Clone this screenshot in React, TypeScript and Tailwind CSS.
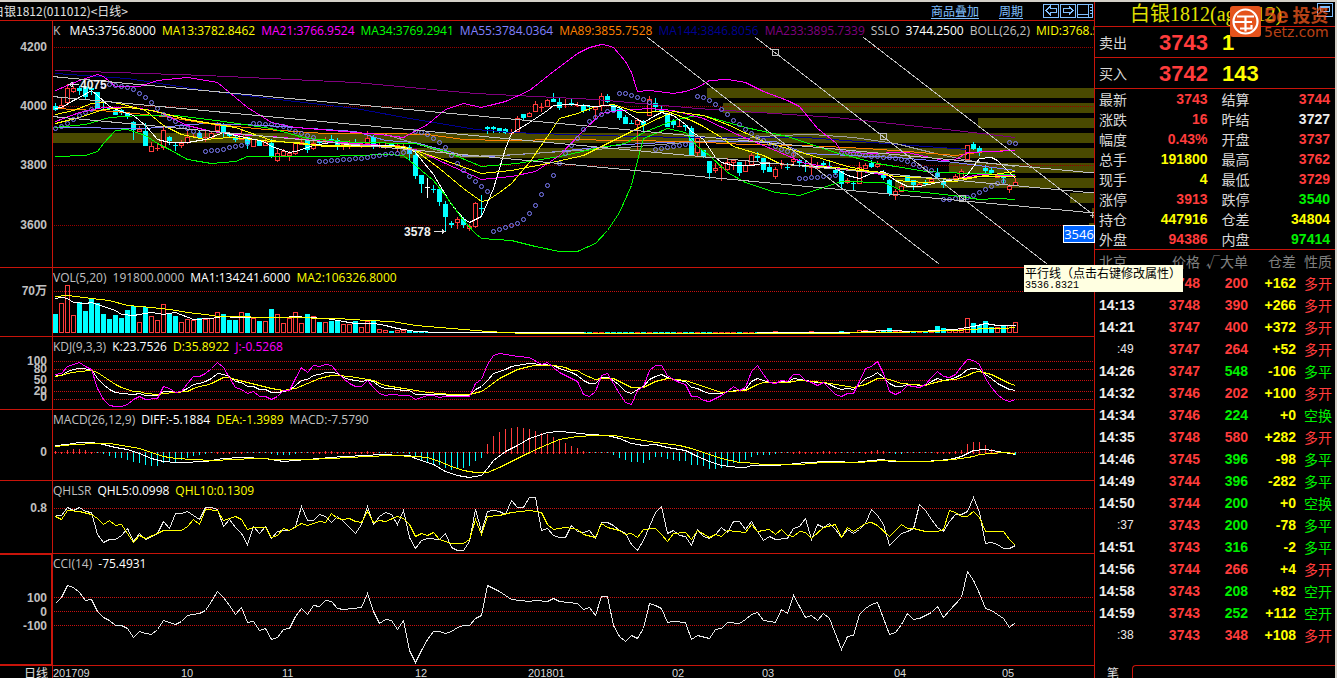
import type { ReactNode } from 'react';
import clsx from 'clsx';

const LATIN = "font-['Open_Sans','Noto_Sans_CJK_SC',sans-serif]";
const BOLD = "font-['Liberation_Sans','Noto_Sans_CJK_SC',sans-serif] font-bold";
const CJK = "font-['Noto_Sans_CJK_SC',sans-serif]";

const RED = '#ff3c3c';
const CYAN = '#00ffff';

// one bar every 6px, first one centred on x = 55
const barX = (i: number) => 55 + i * 6;

// "index y index y ..." -> svg points
const toPoints = (data: string) => {
  const n = data.trim().split(/\s+/).map(Number);
  const out: string[] = [];
  for (let k = 0; k < n.length; k += 2) out.push(`${barX(n[k]) + 0.5},${n[k + 1] + 0.5}`);
  return out.join(' ');
};

// direction, body top, body bottom, high, low
const CANDLES = `d 106 110 103 111|u 105 107 97 107|u 88 102 84 105|u 88 91 86 93|d 88 91 86 95|d 87 97 86 99|d 88 90 86 95|d 92 109 92 109
d 109 110 102 110|d 108 109 106 110|d 110 115 109 115|d 110 113 109 115|d 112 116 112 119|d 122 130 121 140|u 129 131 126 132|d 131 146 123 146
u 146 151 142 152|u 148 149 143 151|u 130 147 126 150|d 137 141 136 145|d 145 146 142 151|u 143 145 140 148|u 137 142 131 144|u 136 137 134 137
d 133 138 130 138|u 137 138 131 142|u 133 137 132 139|u 125 130 122 133|d 124 133 123 137|d 134 136 132 137|d 137 140 136 142|u 134 139 130 140
d 137 144 137 149|u 139 146 139 147|d 141 146 141 146|u 142 145 138 146|d 143 156 139 158|u 153 160 148 162|u 151 155 149 157|u 153 155 151 161
u 143 153 142 155|u 142 144 138 145|d 140 150 140 153|u 143 148 139 150|d 142 143 140 146|u 140 141 137 143|d 139 140 135 142|d 140 147 138 150
u 144 146 141 150|u 144 146 140 149|d 142 146 139 147|u 144 146 142 148|u 138 143 131 146|d 137 145 135 149|u 145 146 142 148|u 145 147 142 149
d 144 146 143 148|u 145 147 143 152|u 146 147 143 149|d 147 154 145 160|d 155 176 150 179|d 175 184 175 193|w 187 188 178 198|d 189 190 185 193
d 189 202 189 206|d 204 217 201 231|d 223 225 221 228|u 219 222 217 229|d 219 225 217 228|u 226 228 224 231|u 203 226 202 228|d 208 209 195 216
d 127 129 126 134|d 127 129 126 133|d 128 131 128 133|d 129 133 128 134|u 133 134 129 135|u 118 131 116 132|d 114 118 114 120|u 113 116 112 117
u 104 111 101 112|u 107 108 103 112|u 100 106 99 107|d 99 102 93 102|d 102 108 97 110|u 104 105 99 108|d 103 104 98 106|u 105 106 102 107
d 105 111 104 113|d 106 107 106 111|u 107 109 107 118|u 96 105 93 111|d 96 102 94 103|d 105 111 104 111|d 109 118 108 120|d 117 124 115 124
d 123 124 120 124|u 120 124 118 150|d 122 125 120 132|u 99 115 96 116|d 103 107 98 112|d 110 112 105 113|d 113 127 113 127|d 121 125 119 128
u 126 127 121 127|d 125 127 124 131|d 128 155 126 156|u 138 152 135 156|d 150 157 150 158|d 161 173 161 179|u 168 170 163 173|u 167 168 164 181
u 162 169 158 171|u 160 162 159 170|d 162 173 162 176|u 165 171 161 172|u 155 164 153 166|d 156 158 152 161|d 158 170 158 173|d 167 172 163 172
u 169 176 167 179|u 163 164 160 169|d 167 168 163 170|u 159 161 153 165|d 160 163 159 167|d 165 166 161 172|u 165 167 157 175|u 168 169 162 170
d 163 165 161 168|d 166 167 162 168|d 170 173 169 175|d 171 184 171 189|u 180 182 178 184|d 183 184 181 190|u 167 183 162 184|u 165 168 163 169
d 163 167 160 168|u 164 166 161 168|d 172 178 170 180|d 180 194 179 196|u 191 195 189 200|u 186 191 183 192|d 176 181 176 181|d 180 185 180 190
u 184 186 183 187|d 182 184 180 186|u 179 181 178 182|d 173 177 168 178|d 182 185 180 188|u 179 181 178 182|u 176 178 174 180|u 171 177 169 178
u 145 159 145 159|d 144 149 142 150|d 148 153 146 156|d 168 171 165 173|d 170 173 167 173|u 175 177 175 178|d 176 178 174 183|u 186 189 184 193|u 182 185 178 186`
  .split(/[|\n]/)
  .map((row) => {
    const [dir, ...rest] = row.trim().split(' ');
    const [top, bottom, high, low] = rest.map(Number);
    return { dir, top, bottom, high, low };
  });

const ONES = (n: number) => Array<number>(n).fill(1);

const VOLUME = [
  19, 30, 48, 18, 31, 22, 34, 30, 19, 14, 18, 15, 23, 27, 11, 26, 17, 13, 29, 19, 17, 11, 14, 13, 15, 14, 15, 21, 19, 13,
  13, 21, 20, 15, 12, 12, 24, 19, 10, 15, 21, 10, 19, 17, 11, 11, 12, 12, 9, 9, 12, 6, 12, 12, 4, 3, 2, 3, 3, 2, 2,
  ...ONES(59), 2, ...ONES(5), 2, ...ONES(4), 2, 1, 1,
  3, 3, 2, 3, 2, 5, 2, 2, 2, 2, 2, 2, 3, 7, 5, 3, 3, 4, 15, 10, 8, 12, 6, 6, 7, 8, 11,
];

const MACD_BARS = [
  2, 1, 3, 4, 4, 3, 1, 0, -1, -3, -5, -5, -7, -9, -10, -12, -13, -13, -10, -9, -9, -7, -5, -3, -2, -1, 0, 1, 1, 1, 0, 1, 0,
  0, 0, 0, -1, -2, -2, -2, -1, 0, 0, 1, 1, 2, 2, 1, 1, 1, 1, 1, 2, 1, 0, 0, 0, 0, 0, -1, -4, -8, -9, -11, -12, -15, -17,
  -16, -15, -13, -8, -5, 9, 17, 21, 24, 25, 26, 25, 24, 22, 20, 19, 16, 14, 10, 7, 5, 2, 0, 0, 0, 0, -2, -5, -7, -9, -9,
  -10, -7, -4, -4, -6, -7, -8, -8, -12, -12, -13, -16, -16, -15, -13, -10, -10, -7, -4, -2, -2, -2, -1, 0, 0, 1, 2, 1, 1,
  1, 2, 2, 1, 0, 0, 0, 0, 1, 2, 3, 2, 0, -1, -1, 0, 0, 0, 0, 0, 1, 1, 1, 2, 3, 9, 11, 11, 8, 4, 2, 0, -1, -2,
];

// parabolic stop dots: [first bar, y, y, ...]
const SAR = [
  [0, 128, 126, 123, 119, 115, 112, 109, 104],
  [8, 85, 84, 85, 86, 87, 89, 93, 97, 102, 108, 114, 118, 121, 126, 128, 131, 134],
  [25, 151, 150, 150, 149, 147, 146, 145, 143],
  [33, 123, 123, 124, 124, 125, 126, 128, 131, 133, 135, 137],
  [44, 161, 161, 160, 160, 159, 159, 158, 158, 157, 156, 155, 154, 153, 153, 152, 151],
  [60, 131, 132, 134, 138, 142, 147, 155, 163, 170, 176, 181, 186, 191],
  [73, 231, 229, 227, 225, 223, 219, 213, 205, 194, 185, 175, 163, 153, 145, 138, 129, 121, 117, 114, 111, 110],
  [94, 93, 93, 95, 97, 99, 102],
  [100, 149, 148, 147, 146, 145, 144, 143],
  [107, 96, 97, 100, 104, 109, 114, 120, 124, 129, 133, 137, 140, 143, 146, 149, 151, 154],
  [124, 178, 178, 177, 177, 176, 176, 175],
  [131, 152, 152, 153, 154, 155, 156, 156, 157, 157, 158, 159, 161, 164, 166, 168, 170, 174],
  [148, 199, 199, 198, 197, 197, 195, 192, 189, 186, 183, 181],
  [159, 142, 143],
];

const PRICE_LINES: [string, string][] = [
  ['#80007f', '0 70 25 75 50 82 70 93 90 99 107 108 130 117 150 130 160 137'],
  ['#000090', '0 73 12 78 25 90 40 101 50 108 60 119 70 129 76 132 90 135 105 137 125 137 145 146 152 149'],
  ['#8080ff', '0 127 15 128 25 123 35 125 50 131 55 140 60 142 68 155 72 156 82 152 95 144 105 141 120 141 125 153 140 157 150 162 160 170'],
  ['#a0a0a0', '55 134 60 143 66 154 68 156 74 155 82 152 95 147 105 142 115 138 120 135 126 134 133 137 140 143 146 152 152 160 160 166'],
  ['#ff8000', '0 108 10 111 18 116 25 123 35 129 45 133 55 133 62 134 68 139 75 140 85 139 105 141 115 144 125 145 135 148 142 151 150 155 155 151 160 150'],
  ['#00ff00', '0 127 5 124 9 117 14 115 20 115 28 121 36 128 42 138 50 142 60 143 65 151 71 166 77 163 84 156 90 148 95 143 98 132 103 120 106 116 108 115 115 127 122 136 130 152 137 163 145 171 152 173 160 174'],
  ['#ff00ff', '0 121 4 112 8 107 13 107 17 111 22 125 26 131 30 134 36 136 45 141 55 145 60 149 65 163 71 179 76 176 80 171 84 155 88 130 91 113 94 110 99 108 103 110 108 118 114 135 120 150 125 163 132 169 140 176 150 179 154 174 160 175'],
  ['#ffff00', '0 114 3 110 6 103 9 101 12 105 15 110 18 125 21 134 25 139 29 137 33 139 36 141 40 142 44 145 50 145 56 146 60 150 64 168 68 188 71 201 72 200 74 192 76 183 79 162 82 136 84 118 87 113 90 106 93 104 97 112 102 111 106 120 108 126 111 137 113 146 118 155 121 164 130 167 134 170 138 172 140 180 145 182 150 181 154 176 160 176'],
  ['#ffffff', '0 108 1 107 3 100 4 97 6 90 7 95 9 106 11 111 13 115 15 125 17 139 19 142 22 142 25 139 28 132 30 135 34 140 35 142 36 146 39 152 40 151 43 145 46 142 50 145 56 145 58 147 59 148 60 152 63 174 66 204 68 218 69 222 71 216 73 188 75 148 76 133 79 122 82 110 83 105 86 104 90 106 92 105 94 107 95 111 97 119 98 122 100 115 101 112 103 115 105 124 106 131 108 139 109 148 110 157 111 162 113 165 116 165 118 163 120 163 124 165 130 168 132 175 134 178 136 173 138 171 140 180 142 186 144 186 147 182 151 178 152 174 154 158 156 157 157 160 160 178'],
  ['#ff00ff', '0 90 4 80 7 74 8 76 10 86 14 86 17 80 22 77 27 82 32 107 36 122 40 127 54 134 58 137 62 124 65 109 68 103 71 107 75 101 79 90 83 71 87 53 89 47 91 44 92 45 93 47 95 61 96 72 97 91 99 90 103 93 105 91 107 87 109 80 112 79 115 82 118 91 122 100 124 106 127 128 130 142 131 151 135 153 142 152 148 160 150 159 152 152 160 150'],
  ['#ffff00', '0 123 4 117 8 109 12 107 16 110 22 119 30 127 36 140 45 146 58 146 64 158 71 173 76 170 82 163 88 155 93 140 98 125 103 111 108 115 112 124 118 141 126 155 132 166 140 176 150 179 160 171'],
  ['#00ff00', '0 156 5 155 7 151 8 143 10 130 12 129 15 135 17 143 19 149 22 159 26 163 30 161 32 156 45 156 55 154 58 155 60 165 63 180 65 195 68 220 70 233 71 238 76 240 80 246 84 251 87 251 90 243 92 230 94 212 96 185 97 160 98 138 102 128 105 132 107 146 109 155 112 172 115 182 120 192 124 195 128 187 131 181 138 182 141 190 145 192 151 196 154 199 157 198 160 199'],
];

const VOL_LINES: [string, string][] = [
  ['#ffffff', '0 298 1 297 2 298 3 302 5 303 6 302 8 306 10 310 11 314 13 315 16 312 18 314 20 312 23 319 26 318 28 316 30 317 33 317 38 317 40 316 42 317 45 318 48 321 50 323 53 323 55 325 57 328 60 331 64 332 112 333 122 332 133 332 138 330 144 331 150 329 153 326 155 323 157 325 160 325'],
  ['#ffff00', '0 296 2 295 6 298 9 300 12 305 16 307 19 309 22 312 25 314 27 316 38 317 47 318 52 320 56 321 60 325 66 328 72 331 78 333 125 333 140 332 150 330 155 328 158 328 160 327'],
];

const KDJ_LINES: [string, string][] = [
  ['#ffffff', '0 375 1 375 2 371 3 369 4 368 6 369 7 378 8 384 9 389 10 392 11 393 13 394 14 393 15 395 17 395 18 391 19 391 20 392 21 391 22 388 23 384 24 383 25 381 26 378 27 373 28 374 29 376 30 381 31 382 32 386 33 386 34 389 35 389 36 392 37 392 38 391 39 390 40 385 41 380 42 379 43 375 44 374 45 372 46 372 47 373 48 377 49 379 50 380 51 381 52 380 53 381 54 386 55 388 56 388 58 390 59 390 60 394 64 394 66 395 69 395 70 389 71 386 72 380 73 373 74 371 75 369 76 366 78 364 79 363 81 364 83 365 84 368 86 372 87 375 88 380 89 383 90 383 91 377 92 377 93 380 94 385 95 391 96 393 97 389 98 386 99 379 100 376 101 374 102 377 103 379 105 381 106 387 107 388 108 391 109 393 111 393 112 391 114 390 115 389 116 381 117 378 118 380 119 382 120 383 121 381 122 382 123 378 124 379 125 380 127 382 128 382 129 384 130 387 131 389 132 388 133 389 134 384 135 378 136 376 137 372 138 377 139 383 140 386 141 386 142 384 145 385 146 381 147 378 148 380 149 379 150 377 151 374 152 369 153 368 154 369 155 374 156 378 157 383 158 386 159 389 160 390'],
  ['#ffff00', '0 376 1 375 2 373 4 371 6 370 7 372 8 376 9 380 10 384 11 387 12 389 13 391 14 391 15 393 17 394 18 393 20 392 22 391 23 388 24 386 25 385 26 383 27 380 28 377 29 377 30 379 32 382 34 385 36 388 38 390 39 389 40 388 42 383 44 378 46 375 47 375 49 376 50 377 52 379 53 380 54 383 55 385 58 388 60 390 62 392 66 394 69 394 71 391 72 387 74 378 77 369 79 366 80 365 83 365 85 367 86 370 87 370 88 374 90 379 91 378 93 378 94 381 96 387 98 387 100 381 102 378 105 380 107 384 109 388 111 392 113 391 114 390 115 390 117 384 118 382 122 382 124 380 128 382 130 384 133 387 135 384 137 378 138 378 139 379 140 381 141 383 145 385 146 383 148 380 150 379 152 375 153 372 154 371 156 374 158 380 159 383 160 385'],
  ['#ff00ff', '0 374 1 373 2 366 3 364 4 362 5 366 6 369 7 388 8 399 9 405 10 406 11 406 12 404 13 399 14 396 15 399 17 398 18 386 19 388 20 392 21 391 22 383 23 376 24 376 25 373 26 368 27 362 28 367 29 377 30 387 31 389 32 393 33 391 34 396 35 396 36 399 37 396 38 390 39 390 40 378 41 367 42 372 43 365 44 366 45 364 46 365 47 372 48 378 49 383 50 386 51 386 52 380 53 387 54 393 55 395 56 394 58 395 59 395 60 399 61 397 62 395 63 395 64 397 65 396 66 396 67 396 69 396 70 383 71 379 72 364 73 355 74 353 75 354 77 356 79 357 81 364 82 362 83 367 84 372 85 375 86 378 87 381 88 394 89 396 90 391 91 375 92 373 93 383 94 393 95 402 96 404 97 390 98 386 99 370 100 365 101 365 102 375 103 379 104 382 105 384 106 396 107 396 108 400 109 401 110 398 111 395 112 391 113 386 114 390 115 387 116 371 117 365 118 374 119 382 120 383 121 380 122 381 123 374 124 374 125 380 126 382 127 385 128 382 129 388 130 394 131 396 132 393 133 393 134 381 135 368 136 366 137 361 138 373 139 391 140 394 141 391 142 385 144 387 145 384 146 377 147 371 148 376 149 377 150 374 151 366 152 359 153 360 154 364 155 378 156 387 157 394 158 399 159 401 160 399'],
];

const MACD_LINES: [string, string][] = [
  ['#ffffff', '0 445 2 444 4 442 6 442 7 443 8 444 10 447 12 449 14 453 16 458 18 461 20 462 22 462 24 461 25 461 28 458 31 457 35 458 38 461 40 460 44 458 48 456 52 455 54 454 58 455 59 455 60 458 63 464 65 471 67 475 69 477 71 475 72 468 73 460 75 451 77 445 79 438 81 434 82 432 84 431 86 432 89 434 92 435 94 438 96 443 98 445 100 444 102 447 105 450 107 456 109 461 111 465 114 467 115 467 116 465 120 465 122 464 125 462 129 461 130 461 133 462 136 460 138 459 139 461 143 461 145 461 149 459 151 456 152 453 153 450 155 449 157 451 159 453 160 454'],
  ['#ffff00', '0 446 3 444 7 443 9 443 11 445 14 448 16 452 18 456 20 458 23 459 26 460 30 459 33 458 38 459 42 459 46 458 52 456 56 455 60 456 62 457 64 461 66 466 68 470 70 472 72 472 74 467 77 458 79 452 82 444 84 439 87 436 90 435 93 435 96 438 100 442 104 445 106 448 109 454 111 458 114 462 115 462 118 464 124 464 128 462 134 462 138 460 142 461 145 461 148 460 151 458 153 456 154 454 158 452 160 453'],
];

const QHL_LINES: [string, string][] = [
  ['#e8e8e8', '0 515 1 515 2 507 3 510 4 507 5 511 6 512 7 534 8 542 9 539 10 539 11 535 12 528 13 541 14 533 15 539 17 533 18 521 19 528 20 513 21 513 22 511 23 515 24 519 25 507 26 507 27 509 28 526 29 519 30 527 31 533 32 544 33 526 34 533 35 526 36 538 37 531 38 530 39 530 40 526 41 506 42 520 43 520 44 514 45 516 46 522 47 516 48 521 49 527 50 533 51 524 52 506 53 524 54 516 55 512 56 514 57 524 58 510 59 537 60 548 61 540 62 538 64 539 65 533 66 547 67 550 68 550 69 541 70 509 71 531 72 511 73 510 74 511 75 514 76 500 77 507 78 507 79 497 80 497 81 530 82 528 83 535 84 537 85 537 86 525 87 531 88 532 89 530 90 538 91 522 92 522 93 525 94 530 95 533 96 544 97 550 98 540 99 526 100 512 101 506 102 533 103 530 104 535 105 536 106 545 107 529 108 536 109 538 110 534 111 527 112 532 113 521 114 521 115 529 116 521 117 531 118 540 119 536 120 539 122 538 123 528 124 526 125 518 126 539 127 524 128 527 129 523 130 529 131 537 132 529 133 533 134 529 135 523 136 509 137 515 138 524 139 545 140 539 141 533 142 531 143 528 144 504 145 510 146 519 147 527 148 531 149 521 150 514 151 514 152 511 153 497 154 512 155 543 156 542 157 544 158 548 159 548 160 545'],
  ['#ffff00', '0 516 1 519 2 510 4 511 6 514 7 518 8 524 9 520 10 525 11 524 13 542 14 535 15 538 17 533 18 530 21 530 22 526 23 519 24 524 25 509 27 510 28 520 30 516 31 519 32 529 33 527 35 527 36 537 37 535 38 528 39 530 41 523 42 525 44 521 45 522 46 513 47 518 48 519 49 518 50 521 51 522 52 511 53 522 54 520 55 521 57 516 58 518 59 524 60 536 61 533 62 535 63 532 64 539 66 543 68 543 69 539 70 519 71 534 72 516 74 515 76 512 79 510 81 512 82 524 83 529 85 527 87 529 88 534 90 537 91 523 92 527 94 530 95 534 96 533 97 537 98 529 100 528 101 534 102 541 103 533 105 532 106 539 107 530 109 537 110 534 111 536 112 530 115 532 116 524 117 531 119 529 120 534 121 529 122 535 123 536 124 531 125 532 126 538 128 527 130 524 131 537 132 527 133 531 135 523 136 522 137 525 139 536 141 524 142 528 143 528 145 531 147 531 148 529 149 510 150 512 151 516 152 516 153 511 154 517 155 531 158 531 159 539 160 545'],
];

const CCI_LINES: [string, string][] = [
  ['#e8e8e8', '0 603 1 597 2 585 3 587 4 592 5 600 6 599 7 611 8 617 9 620 10 625 11 625 12 628 13 637 14 631 15 633 16 634 17 629 18 620 20 624 21 621 22 615 24 613 25 610 26 601 27 591 28 597 29 605 30 614 31 607 32 622 33 621 34 630 35 628 36 639 37 637 38 629 39 628 40 616 41 608 42 614 43 605 44 606 45 600 46 601 47 608 48 609 51 607 52 593 53 611 54 623 55 619 56 620 57 629 58 620 59 650 60 662 61 650 62 639 63 631 64 631 65 633 66 631 67 627 68 625 69 625 70 618 71 615 72 585 74 591 76 599 79 601 80 600 82 601 83 598 84 601 87 603 88 609 89 607 90 615 91 596 92 596 93 625 94 636 95 641 96 635 97 638 98 628 99 603 100 605 101 608 102 622 103 621 105 622 106 639 107 635 109 638 110 629 111 628 112 622 114 623 115 619 116 614 117 612 118 620 120 622 121 609 122 613 123 595 125 617 126 615 127 620 128 613 129 618 131 649 132 636 133 635 134 614 135 608 136 604 137 602 139 634 140 632 141 624 142 613 143 619 144 618 146 612 147 606 148 617 149 610 151 597 152 571 153 580 154 593 155 608 156 610 157 614 158 618 159 627 160 622'],
];

// x, y of the profile bands; all of them run off the right edge
const BANDS = [
  [707, 88], [723, 103], [978, 118], [53, 133], [400, 148], [949, 163], [895, 178], [1070, 193], [1092, 208], [1089, 223],
];

const QUOTES: [string, string, string][] = [
  ['最新', '3743', 'text-[#ff3c3c]'], ['结算', '3744', 'text-[#ff3c3c]'],
  ['涨跌', '16', 'text-[#ff3c3c]'], ['昨结', '3727', 'text-[#ececec]'],
  ['幅度', '0.43%', 'text-[#ff3c3c]'], ['开盘', '3737', 'text-[#ff3c3c]'],
  ['总手', '191800', 'text-[#ffff00]'], ['最高', '3762', 'text-[#ff3c3c]'],
  ['现手', '4', 'text-[#ffff00]'], ['最低', '3729', 'text-[#ff3c3c]'],
  ['涨停', '3913', 'text-[#ff3c3c]'], ['跌停', '3540', 'text-[#00f000]'],
  ['持仓', '447916', 'text-[#ffff00]'], ['仓差', '34804', 'text-[#ffff00]'],
  ['外盘', '94386', 'text-[#ff3c3c]'], ['内盘', '97414', 'text-[#00f000]'],
];

// time, price, lot, open interest change, kind, lot is green
const TICKS: [string, string, string, string, string, boolean][] = [
  ['14:08', '3748', '200', '+162', '多开', false],
  ['14:13', '3748', '390', '+266', '多开', false],
  ['14:21', '3747', '400', '+372', '多开', false],
  [':49', '3747', '264', '+52', '多开', false],
  ['14:26', '3747', '548', '-106', '多平', true],
  ['14:32', '3746', '202', '+100', '多开', false],
  ['14:34', '3746', '224', '+0', '空换', true],
  ['14:35', '3748', '580', '+282', '多开', false],
  ['14:46', '3745', '396', '-98', '多平', true],
  ['14:49', '3744', '396', '-282', '多平', true],
  ['14:50', '3744', '200', '+0', '空换', true],
  [':37', '3743', '200', '-78', '多平', true],
  ['14:51', '3743', '316', '-2', '多平', true],
  ['14:56', '3744', '266', '+4', '多开', false],
  ['14:58', '3743', '208', '+82', '空开', true],
  ['14:59', '3743', '252', '+112', '空开', true],
  [':38', '3743', '348', '+108', '多开', false],
];

const MONTHS: [string, number][] = [
  ['201709', 53], ['10', 181], ['11', 282], ['12', 415], ['201801', 528], ['02', 672], ['03', 762], ['04', 894], ['05', 1002],
];

type Label = [text: string, color: string];

function Panel({
  top, height, axis, grid, labels, active, dim, children,
}: {
  top: number;
  height: string;
  axis: [string, number][];
  grid: number[];
  labels: Label[];
  active?: boolean;
  dim?: boolean;
  children: ReactNode;
}) {
  return (
    <section className={clsx('grid grid-cols-[52px_minmax(0,1fr)] border-b border-[#c8140a]', height)}>
      <svg className={clsx('h-full w-full text-[12px]', BOLD, active && 'border-y border-r border-[#c8140a]')}>
        <g transform={`translate(0 ${-top})`} fill="#c0c0c0" textAnchor="end">
          {axis.map(([text, y]) => (
            <text key={text} x={47} y={y + 4}>{text}</text>
          ))}
        </g>
      </svg>
      <div className="grid overflow-hidden border-l border-[#c8140a]">
        <svg className="h-full w-full [grid-area:1/1]" shapeRendering="crispEdges">
          <g transform={`translate(-53 ${-top})`} fill="none">
            {dim && BANDS.map(([x, y]) => <rect key={y} x={x} y={y} width={4000} height={10} fill="#4a4a00" />)}
            {grid.map((y) => (
              <line key={y} x1={54} x2={4000} y1={y + 0.5} y2={y + 0.5} stroke={dim ? '#980000' : '#c81010'} strokeDasharray="1 1" />
            ))}
            {children}
          </g>
        </svg>
        <p className={clsx('z-10 flex gap-[6px] whitespace-pre pt-[2px] text-[12px] leading-4 [grid-area:1/1]', LATIN)}>
          {labels.map(([text, color]) => (
            <span key={text} className={color}>{text}</span>
          ))}
        </p>
      </div>
    </section>
  );
}

function Lines({ data }: { data: [string, string][] }) {
  return (
    <>
      {data.map(([color, pts], k) => (
        <polyline key={k} points={toPoints(pts)} stroke={color} />
      ))}
    </>
  );
}

function Candles() {
  return (
    <>
      {CANDLES.map((c, i) => {
        const x = barX(i);
        const color = c.dir === 'u' ? RED : c.dir === 'd' ? CYAN : '#ffffff';
        const h = Math.max(1, c.bottom - c.top);
        return (
          <g key={i}>
            <rect x={x} y={c.high} width={1} height={c.low - c.high} fill={color} />
            {c.dir === 'u' && h > 1 ? (
              <rect x={x - 1.5} y={c.top + 0.5} width={4} height={h} stroke={color} fill="#000" />
            ) : (
              <rect x={x - 2} y={c.top} width={5} height={h} fill={color} />
            )}
          </g>
        );
      })}
    </>
  );
}

function VolumeBars() {
  return (
    <>
      {VOLUME.map((v, i) => {
        const x = barX(i);
        return CANDLES[i]?.dir === 'u' && v > 2 ? (
          <rect key={i} x={x - 1.5} y={333.5 - v} width={4} height={v - 1} stroke={RED} />
        ) : (
          <rect key={i} x={x - 2} y={333 - v} width={5} height={v} fill={CANDLES[i]?.dir === 'u' ? RED : CYAN} />
        );
      })}
    </>
  );
}

function MacdBars() {
  return (
    <>
      {MACD_BARS.map((v, i) => (
        <rect key={i} x={barX(i)} y={v > 0 ? 453 - v : 452} width={1} height={Math.max(1, Math.abs(v) + 1)} fill={v > 0 ? RED : CYAN} />
      ))}
    </>
  );
}

function Drawings() {
  return (
    <g stroke="#c0c0c0">
      <path d="M52 76.5 1094 173M52 96.5 1094 193M52 116.5 1094 213" />
      <path d="M647 37 939 264M755 37 1047 264M863 37 1091 213" />
      <path d="M772.5 49.5h6v6h-6zM880.5 133.5h6v6h-6zM959.5 195.5h6v6h-6z" />
      <path d="M1090 215h5M1092.5 213v5" />
    </g>
  );
}

function NavButton({ label, children }: { label: string; children: ReactNode }) {
  return (
    <button type="button" aria-label={label} className="h-[14px] w-4">
      <svg viewBox="0 0 16 14" className="h-full w-full" fill="none" stroke="#80c0ff" shapeRendering="crispEdges">
        <path d="M.5.5h15v13H.5z" />
        {children}
      </svg>
    </button>
  );
}

function Logo() {
  return (
    <div className="absolute left-[135px] top-1 flex gap-[3px] text-[#e4531c]">
      <svg viewBox="0 0 31 31" className="h-[31px] w-[31px]">
        <rect width="31" height="31" rx="3" fill="#e4531c" />
        <circle cx="15.500" cy="15.500" r="12" fill="none" stroke="#fff" strokeWidth="2.200" />
        <path d="M7 10.500h17M4 16h18M15.500 10.500v15M10 22.500h11.500v-3.500" fill="none" stroke="#fff" strokeWidth="2.200" />
      </svg>
      <div className="opacity-80">
        <p className={clsx('flex items-center whitespace-nowrap leading-5', BOLD)}>
          <span className="text-[22px]">5e</span>
          <span className="ml-1 text-[18px]">投资</span>
        </p>
        <p className="font-['DejaVu_Sans',sans-serif] text-[14px] leading-3">5etz.com</p>
      </div>
    </div>
  );
}

function BidAsk({ side, price, lots }: { side: string; price: string; lots: string }) {
  return (
    <div className="flex h-[31px] items-center border-b border-[#c8140a] pl-1">
      <span className={clsx('w-[42px] text-[14px] text-[#d8d8d8]', CJK)}>{side}</span>
      <span className={clsx('w-[67px] text-right text-[22px] text-[#ff3c3c]', BOLD)}>{price}</span>
      <span className={clsx('ml-[14px] text-[22px] text-[#ffff00]', BOLD)}>{lots}</span>
    </div>
  );
}

export default function App() {
  return (
    <div className="relative flex min-h-screen border-r-2 border-t-2 border-[#d4d0c8] bg-black">
      <main className="min-w-0 flex-1 overflow-hidden">
        <header className={clsx('flex h-[19px] items-center border-b border-[#c8140a] text-[12px] leading-4', CJK)}>
          <h1 className="-ml-2 flex-1 whitespace-nowrap text-[#e0e0e0]">白银1812(011012)&lt;日线&gt;</h1>
          <nav className="flex items-center pr-px text-[#80c0ff]">
            <a href="#overlay" className="mr-5 underline underline-offset-2">商品叠加</a>
            <a href="#period" className="mr-5 underline underline-offset-2">周期</a>
            <span className="flex gap-px">
              <NavButton label="左移"><path d="M3 6.500 7 2.500v2h6v4H7v2z" /></NavButton>
              <NavButton label="右移"><path d="M13 6.500 9 2.500v2H3v4h6v2z" /></NavButton>
              <NavButton label="布局"><path d="M11.500 0v14M0 10.500h11M13 3.500h2M13 6.500h2M13 9.500h2" /></NavButton>
            </span>
          </nav>
        </header>

        <Panel
          top={21}
          height="h-[247px]"
          dim
          axis={[['4200', 47], ['4000', 106], ['3800', 165], ['3600', 225]]}
          grid={[47, 106, 165, 225]}
          labels={[
            ['K ', 'text-[#c0c0c0]'],
            ['MA5:3756.8000', 'text-white'],
            ['MA13:3782.8462', 'text-[#ffff00]'],
            ['MA21:3766.9524', 'text-[#ff00ff]'],
            ['MA34:3769.2941', 'text-[#00ff00]'],
            ['MA55:3784.0364', 'text-[#8080ff]'],
            ['MA89:3855.7528', 'text-[#ff8000]'],
            ['MA144:3846.8056', 'text-[#000090]'],
            ['MA233:3895.7339', 'text-[#800080]'],
            ['SSLO', 'text-[#c0c0c0]'],
            ['3744.2500', 'text-white'],
            ['BOLL(26,2)', 'text-[#c0c0c0]'],
            ['MID:3768.5769', 'text-[#ffff00]'],
          ]}
        >
          <Candles />
          <Lines data={PRICE_LINES} />
          {SAR.map(([start, ...ys]) =>
            ys.map((y, k) => (
              <circle key={`${start}-${k}`} cx={barX(start + k) + 0.5} cy={y + 0.5} r={2} stroke="#8080ff" shapeRendering="auto" />
            )),
          )}
          <Drawings />
          <path d="M69 84.500h10M69 84.500l3-2v4zM434 231.500h10M445 231.500l-3-2v4z" stroke="#e0e0e0" />
          <g className={clsx('text-[12px]', BOLD)} fill="#f0f0f0">
            <text x={80} y={89}>4075</text>
            <text x={404} y={236}>3578</text>
          </g>
        </Panel>

        <Panel
          top={268}
          height="h-[69px]"
          axis={[['70万', 291]]}
          grid={[291]}
          labels={[
            ['VOL(5,20)', 'text-[#c0c0c0]'],
            ['191800.0000', 'text-[#c0c0c0]'],
            ['MA1:134241.6000', 'text-white'],
            ['MA2:106326.8000', 'text-[#ffff00]'],
          ]}
        >
          <VolumeBars />
          <Lines data={VOL_LINES} />
        </Panel>

        <Panel
          top={337}
          height="h-[73px]"
          axis={[['100', 361], ['80', 369], ['50', 380], ['20', 391], ['0', 397]]}
          grid={[361, 369, 380, 391, 399]}
          labels={[
            ['KDJ(9,3,3)', 'text-[#c0c0c0]'],
            ['K:23.7526', 'text-white'],
            ['D:35.8922', 'text-[#ffff00]'],
            ['J:-0.5268', 'text-[#ff00ff]'],
          ]}
        >
          <Lines data={KDJ_LINES} />
        </Panel>

        <Panel
          top={410}
          height="h-[71px]"
          axis={[['0', 452]]}
          grid={[452]}
          labels={[
            ['MACD(26,12,9)', 'text-[#c0c0c0]'],
            ['DIFF:-5.1884', 'text-white'],
            ['DEA:-1.3989', 'text-[#ffff00]'],
            ['MACD:-7.5790', 'text-[#c0c0c0]'],
          ]}
        >
          <MacdBars />
          <Lines data={MACD_LINES} />
        </Panel>

        <Panel
          top={481}
          height="h-[73px]"
          axis={[['0.8', 508]]}
          grid={[508]}
          labels={[
            ['QHLSR', 'text-[#c0c0c0]'],
            ['QHL5:0.0998', 'text-white'],
            ['QHL10:0.1309', 'text-[#ffff00]'],
          ]}
        >
          <Lines data={QHL_LINES} />
        </Panel>

        <Panel
          top={554}
          height="h-[112px]"
          active
          axis={[['100', 597], ['0', 611], ['-100', 625]]}
          grid={[597, 611, 625]}
          labels={[
            ['CCI(14)', 'text-[#c0c0c0]'],
            ['-75.4931', 'text-white'],
          ]}
        >
          <Lines data={CCI_LINES} />
        </Panel>

        <footer className="grid h-3 grid-cols-[52px_minmax(0,1fr)] overflow-hidden">
          <span className={clsx('pr-1 text-right text-[12px] leading-[14px] text-[#e0e0e0]', CJK)}>日线</span>
          <svg className="h-full w-full border-l border-[#c8140a] font-['Liberation_Sans',sans-serif] text-[11px]" fill="#d8d8d8">
            {MONTHS.map(([text, x]) => (
              <text key={text} x={x - 53} y={11}>{text}</text>
            ))}
          </svg>
        </footer>
      </main>

      <aside className="flex w-[241px] flex-col border-l border-[#c8140a]">
        <div className="relative h-[25px] border-b border-[#c8140a] pl-[35px]">
          <h2 className="whitespace-nowrap font-['Liberation_Serif','Noto_Sans_CJK_SC',serif] text-[20px] leading-6 text-[#e0e000]">
            白银1812(ag1812)
          </h2>
          <button type="button" aria-label="窗口" className="absolute right-[2px] top-px h-[14px] w-4">
            <svg viewBox="0 0 16 14" className="h-full w-full" fill="none" stroke="#80c0ff" shapeRendering="crispEdges">
              <path d="M.5.5h15v13H.5zM3.500 3.500h9v5h-9zM4 4.500h8" />
            </svg>
          </button>
          <Logo />
        </div>
        <BidAsk side="卖出" price="3743" lots="1" />
        <BidAsk side="买入" price="3742" lots="143" />

        <dl className="grid grid-cols-2 gap-x-[14px] border-b border-[#c8140a] pl-1 pr-[5px]">
          {QUOTES.map(([name, value, color]) => (
            <div key={name} className="flex h-5 items-center justify-between text-[14px] leading-5">
              <dt className={clsx('text-[#d8d8d8]', CJK)}>{name}</dt>
              <dd className={clsx(color, BOLD)}>{value}</dd>
            </div>
          ))}
        </dl>

        <table className="ml-1 w-[233px] table-fixed border-collapse text-right text-[14px] leading-5">
          <colgroup>
            <col className="w-[47px]" />
            <col className="w-[54px]" />
            <col className="w-12" />
            <col className="w-12" />
            <col className="w-9" />
          </colgroup>
          <thead className={clsx('text-[#808080]', CJK)}>
            <tr className="h-[22px] whitespace-nowrap">
              <th className="p-0 text-left font-normal">北京</th>
              <th className="p-0 font-normal">价格</th>
              <th className="p-0 font-normal">√大单</th>
              <th className="p-0 font-normal">仓差</th>
              <th className="p-0 font-normal">性质</th>
            </tr>
          </thead>
          <tbody>
            {TICKS.map(([time, price, lot, change, kind, green], k) => (
              <tr key={k} className="h-[22px]">
                <td
                  className={clsx(
                    'p-0 text-left text-[#ececec]',
                    time.length > 3 ? BOLD : "pl-[18px] font-['Liberation_Sans',sans-serif] text-[12px]",
                  )}
                >
                  {time}
                </td>
                <td className={clsx('p-0 text-[#ff3c3c]', BOLD)}>{price}</td>
                <td className={clsx('p-0', green ? 'text-[#00f000]' : 'text-[#ff3c3c]', BOLD)}>{lot}</td>
                <td className={clsx('p-0 text-[#ffff00]', BOLD)}>{change}</td>
                <td className={clsx('p-0', green ? 'text-[#00f000]' : 'text-[#ff3c3c]', CJK)}>{kind}</td>
              </tr>
            ))}
          </tbody>
        </table>

        <div className="mt-auto flex h-[13px] overflow-hidden">
          <span className={clsx('w-[37px] pl-3 text-[12px] leading-[15px] text-[#e0e0e0]', CJK)}>笔</span>
          <div className="flex-1 rounded-tl border-l border-t border-[#c8140a]" />
        </div>
      </aside>

      <output className={clsx('absolute right-[240px] top-[223px] z-20 h-[18px] w-8 border border-white bg-[#0064ff] text-center text-[13px] leading-4 text-white', LATIN)}>
        3546
      </output>
      <div
        role="tooltip"
        className={clsx('absolute right-[152px] top-[263px] z-20 h-[27px] w-[159px] overflow-hidden whitespace-nowrap bg-[#ffffe1] pl-px text-black', CJK)}
      >
        <p className="text-[12px] leading-4">平行线（点击右键修改属性）</p>
        <p className="font-['Liberation_Mono',monospace] text-[10px] leading-[10px]">3536.8321</p>
      </div>
    </div>
  );
}
